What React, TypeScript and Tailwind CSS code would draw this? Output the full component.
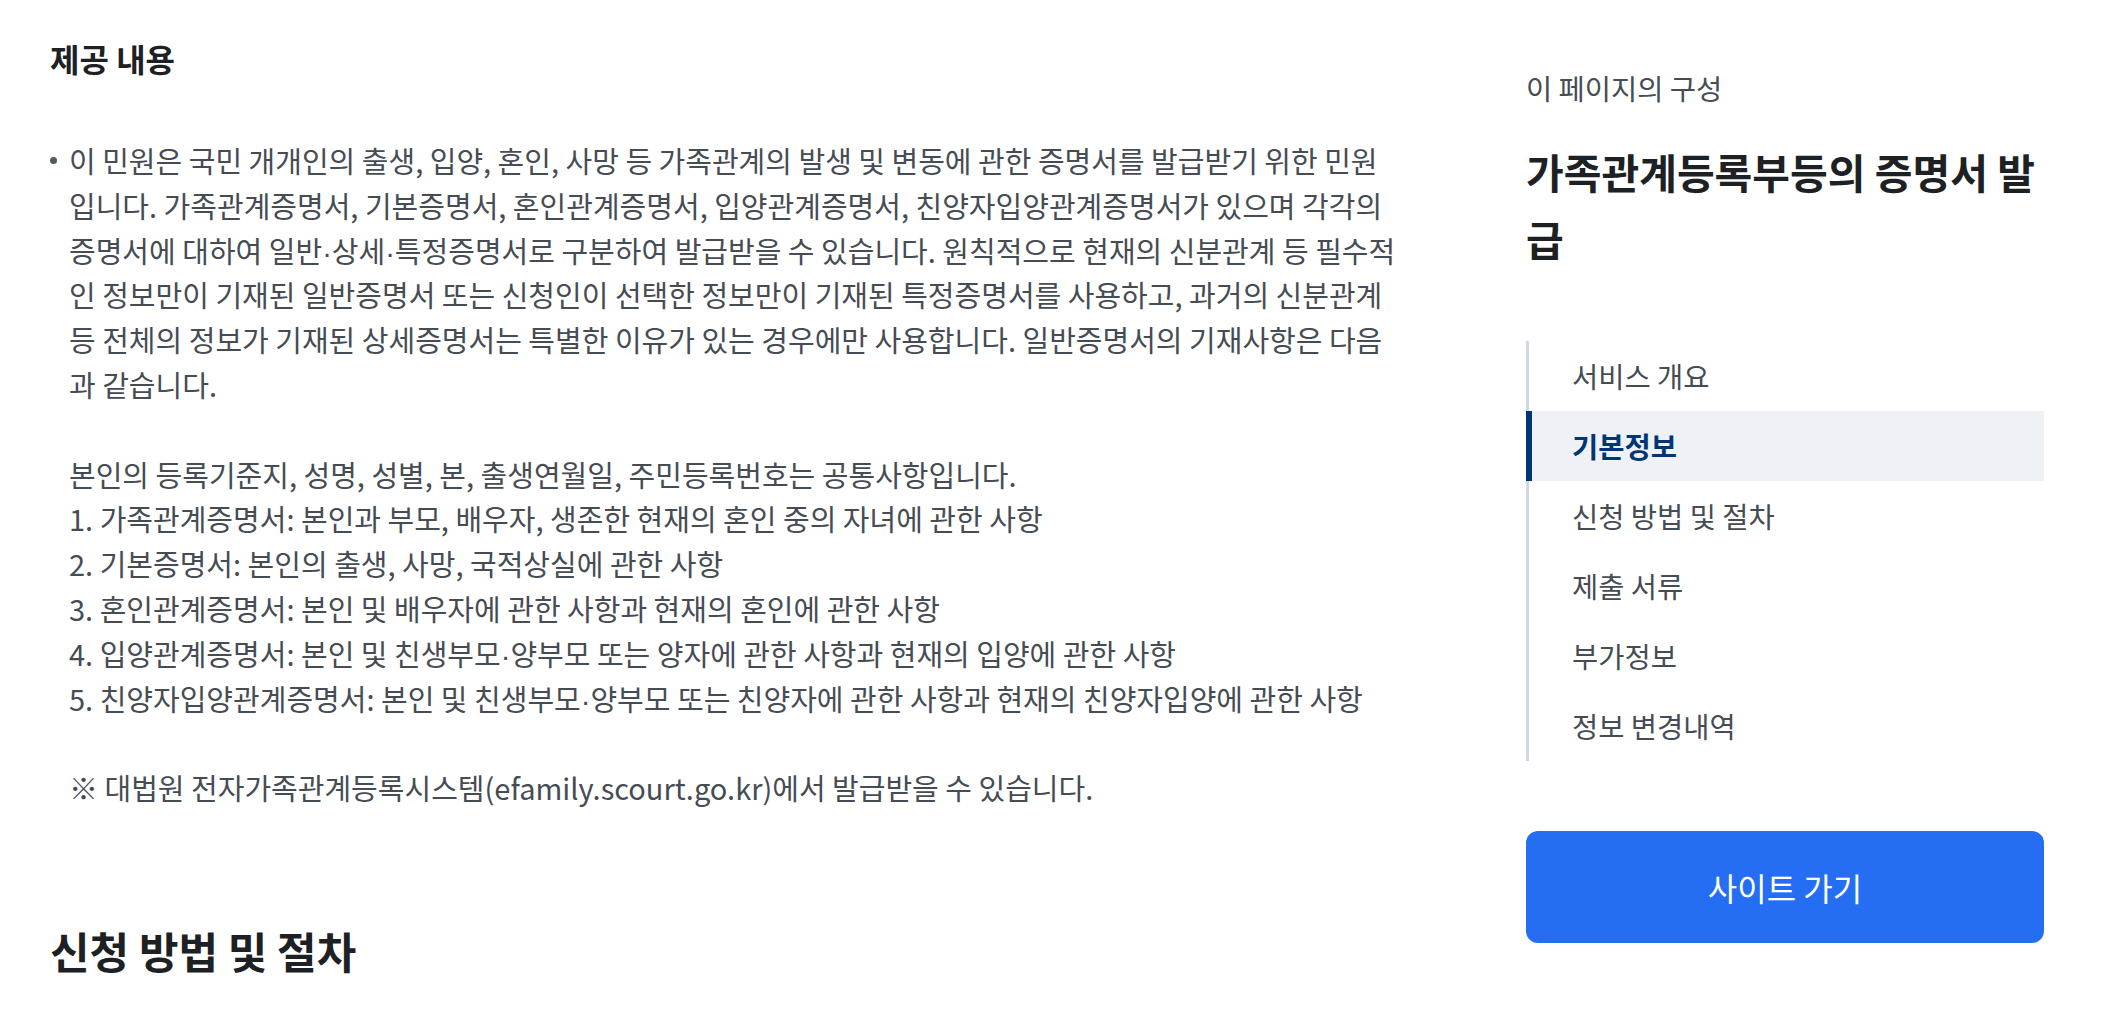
import React from "react";

const navItems = ["서비스 개요", "기본정보", "신청 방법 및 절차", "제출 서류", "부가정보", "정보 변경내역"];

// narrow middle dot, as in the original web font
function Dot() {
  return <span className="font-['Liberation_Sans',sans-serif] leading-none">·</span>;
}

export default function App() {
  const active = "기본정보";

  return (
    <div className="flex min-h-screen bg-white font-['Noto_Sans_CJK_KR','Noto_Sans',sans-serif] text-[#1e2124]">
      <main className="ml-[50px] w-[1322px] shrink-0 pt-[37px]">
        <h3 className="text-[32px] font-bold leading-[43px] text-[#1e2124]">제공 내용</h3>

        <ul className="mt-[58px]">
          <li className="flex">
            <span className="mt-[19px] mr-[12px] h-[7px] w-[7px] shrink-0 rounded-full bg-[#555b62]" />
            <div className="text-[29px] leading-[44.8px] text-[#464c53] whitespace-nowrap">
              <p>
                이 민원은 국민 개개인의 출생, 입양, 혼인, 사망 등 가족관계의 발생 및 변동에 관한 증명서를 발급받기 위한 민원
                <br />
                입니다. 가족관계증명서, 기본증명서, 혼인관계증명서, 입양관계증명서, 친양자입양관계증명서가 있으며 각각의
                <br />
                증명서에 대하여 일반<Dot />상세<Dot />특정증명서로 구분하여 발급받을 수 있습니다. 원칙적으로 현재의 신분관계 등 필수적
                <br />
                인 정보만이 기재된 일반증명서 또는 신청인이 선택한 정보만이 기재된 특정증명서를 사용하고, 과거의 신분관계
                <br />
                등 전체의 정보가 기재된 상세증명서는 특별한 이유가 있는 경우에만 사용합니다. 일반증명서의 기재사항은 다음
                <br />
                과 같습니다.
              </p>
              <p className="mt-[44.8px]">
                본인의 등록기준지, 성명, 성별, 본, 출생연월일, 주민등록번호는 공통사항입니다.
                <br />
                1. 가족관계증명서: 본인과 부모, 배우자, 생존한 현재의 혼인 중의 자녀에 관한 사항
                <br />
                2. 기본증명서: 본인의 출생, 사망, 국적상실에 관한 사항
                <br />
                3. 혼인관계증명서: 본인 및 배우자에 관한 사항과 현재의 혼인에 관한 사항
                <br />
                4. 입양관계증명서: 본인 및 친생부모<Dot />양부모 또는 양자에 관한 사항과 현재의 입양에 관한 사항
                <br />
                5. 친양자입양관계증명서: 본인 및 친생부모<Dot />양부모 또는 친양자에 관한 사항과 현재의 친양자입양에 관한 사항
              </p>
              <p className="mt-[44.8px]">※ 대법원 전자가족관계등록시스템(efamily.scourt.go.kr)에서 발급받을 수 있습니다.</p>
            </div>
          </li>
        </ul>

        <h2 className="mt-[110px] text-[43px] font-bold leading-[60px] text-[#1e2124]">신청 방법 및 절차</h2>
      </main>

      <aside className="ml-[154px] w-[518px] shrink-0 pt-[68px]">
        <p className="text-[28.5px] leading-[40px] text-[#464c53]">이 페이지의 구성</p>
        <h2 className="mt-[30px] text-[41px] font-bold leading-[67px] text-[#1e2124]">가족관계등록부등의 증명서 발급</h2>

        <ul className="mt-[69px] border-l-[3px] border-[#cfd8e4]">
          {navItems.map((item) => (
            <li
              key={item}
              className={`-ml-[3px] flex h-[70px] items-center border-l-[6px] pl-[40px] text-[28.5px] ${
                item === active
                  ? "border-[#003675] bg-[#eef1f6] font-bold text-[#003675]"
                  : "border-transparent text-[#464c53]"
              }`}
            >
              {item}
            </li>
          ))}
        </ul>

        <button className="mt-[70px] flex h-[112px] w-full items-center justify-center rounded-[12px] bg-[#256ef4] text-[32px] text-white">
          사이트 가기
        </button>
      </aside>
    </div>
  );
}
